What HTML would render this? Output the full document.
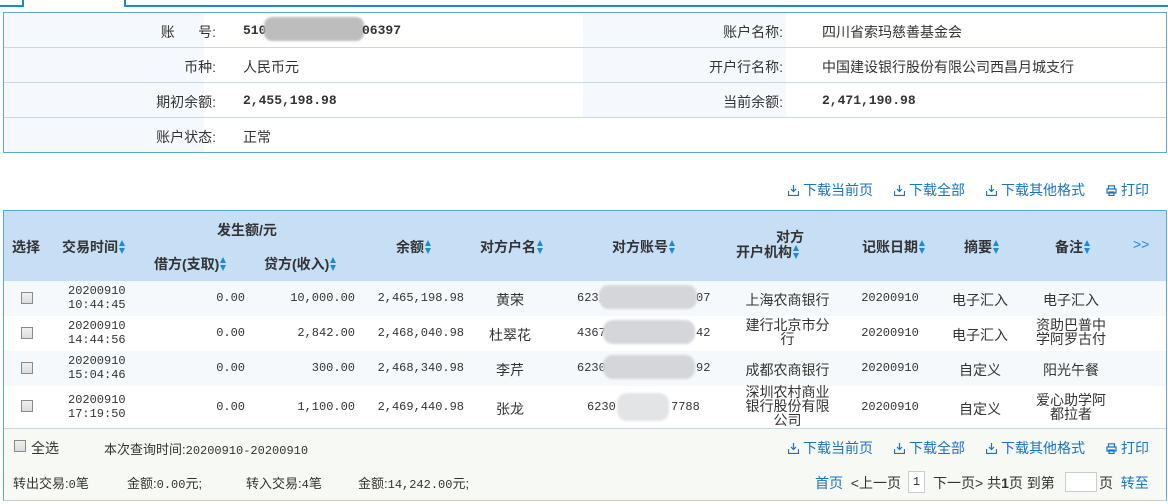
<!DOCTYPE html>
<html><head><meta charset="utf-8"><style>
*{margin:0;padding:0;box-sizing:border-box}
body{width:1168px;height:504px;background:#fff;position:relative;overflow:hidden;font-family:"Liberation Sans","Noto Sans CJK SC",sans-serif;font-size:13px;color:#333}
.a{position:absolute;white-space:nowrap}
.mono{font-family:"Liberation Mono","Noto Sans CJK SC",monospace;font-size:12px}
.b{font-weight:bold}
.blue{color:#1a73c0}
.cb{position:absolute;width:12px;height:12px;border:1px solid #8a8a8a;background:linear-gradient(#f0f0f0,#dcdcdc)}
.blur{position:absolute;background:#d4d6d9;border-radius:10px;filter:blur(1px)}
.ar{display:inline-block;width:7px;height:14px;vertical-align:-2px;margin-left:1px;position:relative}
.ar:before{content:"";position:absolute;left:0;top:0;border-left:3.5px solid transparent;border-right:3.5px solid transparent;border-bottom:6px solid #1e8ad6}
.ar:after{content:"";position:absolute;left:0;top:8px;border-left:3.5px solid transparent;border-right:3.5px solid transparent;border-top:6px solid #1e8ad6}
.th{font-weight:bold;font-size:14px;color:#333}
.ic{display:inline-block;width:11px;height:11px;vertical-align:-1px;margin-right:4px}
</style></head><body>
<!-- tabs -->
<div class="a" style="left:0;top:5px;width:24px;height:2px;background:#1e88d0"></div>
<div class="a" style="left:22px;top:0;width:2px;height:7px;background:#1e88d0"></div>
<div class="a" style="left:124px;top:0;width:2px;height:7px;background:#1e88d0"></div>
<div class="a" style="left:124px;top:5px;width:1044px;height:2px;background:#1e88d0"></div>
<!-- info table -->
<div class="a" style="left:3px;top:12px;width:1164px;height:141px;border:1px solid #5aa6e0;background:#fff"></div>
<div class="a" style="left:4px;top:13px;width:200px;height:139px;background:#f5f9fd"></div>
<div class="a" style="left:583px;top:13px;width:203px;height:104px;background:#f5f9fd"></div>
<div class="a" style="left:4px;top:47px;width:1162px;height:1px;background:#c8d8e8"></div>
<div class="a" style="left:4px;top:82px;width:1162px;height:1px;background:#c8d8e8"></div>
<div class="a" style="left:4px;top:117px;width:1162px;height:1px;background:#c8d8e8"></div>
<div class="a" style="left:4px;top:22px;width:212px;text-align:right;font-size:14px">账&nbsp;&nbsp;&nbsp;&nbsp;&nbsp;&nbsp;号:</div>
<div class="a" style="left:4px;top:57px;width:212px;text-align:right;font-size:14px">币种:</div>
<div class="a" style="left:4px;top:92px;width:212px;text-align:right;font-size:14px">期初余额:</div>
<div class="a" style="left:4px;top:127px;width:212px;text-align:right;font-size:14px">账户状态:</div>
<div class="a mono b" style="left:243px;top:23px;font-size:13px">510</div>
<div class="blur" style="left:264px;top:17px;width:100px;height:24px;background:#bdbdbd;border-radius:8px"></div>
<div class="a mono b" style="left:362px;top:23px;font-size:13px">06397</div>
<div class="a" style="left:243px;top:57px;font-size:14px">人民币元</div>
<div class="a mono b" style="left:243px;top:93px;font-size:13px">2,455,198.98</div>
<div class="a" style="left:243px;top:127px;font-size:14px">正常</div>
<div class="a" style="left:583px;top:22px;width:200px;text-align:right;font-size:14px">账户名称:</div>
<div class="a" style="left:583px;top:57px;width:200px;text-align:right;font-size:14px">开户行名称:</div>
<div class="a" style="left:583px;top:92px;width:200px;text-align:right;font-size:14px">当前余额:</div>
<div class="a" style="left:822px;top:22px;font-size:14px">四川省索玛慈善基金会</div>
<div class="a" style="left:822px;top:57px;font-size:14px">中国建设银行股份有限公司西昌月城支行</div>
<div class="a mono b" style="left:822px;top:93px;font-size:13px">2,471,190.98</div>
<!-- toolbar -->
<div class="a blue" style="left:788px;top:180px;font-size:14px"><svg class="ic" viewBox="0 0 11 11"><path d="M5.5 0v6M3 4l2.5 2.5L8 4M.5 6v4.5h10V6" fill="none" stroke="#1a73c0" stroke-width="1.2"/></svg>下载当前页</div>
<div class="a blue" style="left:894px;top:180px;font-size:14px"><svg class="ic" viewBox="0 0 11 11"><path d="M5.5 0v6M3 4l2.5 2.5L8 4M.5 6v4.5h10V6" fill="none" stroke="#1a73c0" stroke-width="1.2"/></svg>下载全部</div>
<div class="a blue" style="left:986px;top:180px;font-size:14px"><svg class="ic" viewBox="0 0 11 11"><path d="M5.5 0v6M3 4l2.5 2.5L8 4M.5 6v4.5h10V6" fill="none" stroke="#1a73c0" stroke-width="1.2"/></svg>下载其他格式</div>
<div class="a blue" style="left:1106px;top:180px;font-size:14px"><svg class="ic" viewBox="0 0 11 11"><path d="M2.5 4V.8h6V4M1 4h9v4H1zM3 7h5v3.5H3z" fill="none" stroke="#1a73c0" stroke-width="1.2"/></svg>打印</div>
<!-- data table -->
<div class="a" style="left:3px;top:210px;width:1164px;height:291px;border:1px solid #5aa6e0;border-bottom-color:#ccc"></div>
<div class="a" style="left:4px;top:211px;width:1162px;height:70px;background:#c6dff5"></div>
<div class="a" style="left:4px;top:281px;width:1162px;height:35px;background:#f5f9fc"></div>
<div class="a" style="left:4px;top:351px;width:1162px;height:35px;background:#f5f9fc"></div>
<div class="a" style="left:4px;top:428px;width:1162px;height:72px;background:#f7f9f4;border-top:1px solid #c8d8e8"></div>
<div class="a th" style="left:12px;top:237px">选择</div>
<div class="a th" style="left:62px;top:237px">交易时间<i class="ar"></i></div>
<div class="a th" style="left:217px;top:220px">发生额/元</div>
<div class="a th" style="left:154px;top:254px">借方(支取)<i class="ar"></i></div>
<div class="a th" style="left:264px;top:254px">贷方(收入)<i class="ar"></i></div>
<div class="a th" style="left:396px;top:237px">余额<i class="ar"></i></div>
<div class="a th" style="left:480px;top:237px">对方户名<i class="ar"></i></div>
<div class="a th" style="left:612px;top:237px">对方账号<i class="ar"></i></div>
<div class="a th" style="left:776px;top:230px;line-height:14px">对方</div>
<div class="a th" style="left:736px;top:244px;line-height:16px">开户机构<i class="ar"></i></div>
<div class="a th" style="left:862px;top:237px">记账日期<i class="ar"></i></div>
<div class="a th" style="left:964px;top:237px">摘要<i class="ar"></i></div>
<div class="a th" style="left:1055px;top:237px">备注<i class="ar"></i></div>
<div class="a" style="left:1133px;top:236px;color:#1e8ad6;font-size:14px">&gt;&gt;</div>

<!-- rows -->
<div class="cb" style="left:21px;top:292px"></div>
<div class="cb" style="left:21px;top:327px"></div>
<div class="cb" style="left:21px;top:362px"></div>
<div class="cb" style="left:21px;top:400px"></div>

<div class="a mono" style="left:68px;top:284px;line-height:14px">20200910<br>10:44:45</div>
<div class="a mono" style="left:68px;top:319px;line-height:14px">20200910<br>14:44:56</div>
<div class="a mono" style="left:68px;top:354px;line-height:14px">20200910<br>15:04:46</div>
<div class="a mono" style="left:68px;top:393px;line-height:14px">20200910<br>17:19:50</div>

<div class="a mono" style="left:140px;top:291px;width:105px;text-align:right">0.00</div>
<div class="a mono" style="left:140px;top:326px;width:105px;text-align:right">0.00</div>
<div class="a mono" style="left:140px;top:361px;width:105px;text-align:right">0.00</div>
<div class="a mono" style="left:140px;top:400px;width:105px;text-align:right">0.00</div>

<div class="a mono" style="left:240px;top:291px;width:115px;text-align:right">10,000.00</div>
<div class="a mono" style="left:240px;top:326px;width:115px;text-align:right">2,842.00</div>
<div class="a mono" style="left:240px;top:361px;width:115px;text-align:right">300.00</div>
<div class="a mono" style="left:240px;top:400px;width:115px;text-align:right">1,100.00</div>

<div class="a mono" style="left:350px;top:291px;width:114px;text-align:right">2,465,198.98</div>
<div class="a mono" style="left:350px;top:326px;width:114px;text-align:right">2,468,040.98</div>
<div class="a mono" style="left:350px;top:361px;width:114px;text-align:right">2,468,340.98</div>
<div class="a mono" style="left:350px;top:400px;width:114px;text-align:right">2,469,440.98</div>

<div class="a" style="left:470px;top:290px;width:80px;text-align:center;font-size:14px">黄荣</div>
<div class="a" style="left:470px;top:325px;width:80px;text-align:center;font-size:14px">杜翠花</div>
<div class="a" style="left:470px;top:360px;width:80px;text-align:center;font-size:14px">李芹</div>
<div class="a" style="left:470px;top:399px;width:80px;text-align:center;font-size:14px">张龙</div>

<div class="a mono" style="left:577px;top:291px">6231</div><div class="a mono" style="left:696px;top:291px">07</div>
<div class="a mono" style="left:577px;top:326px">4367</div><div class="a mono" style="left:696px;top:326px">42</div>
<div class="a mono" style="left:577px;top:361px">6230</div><div class="a mono" style="left:696px;top:361px">92</div>
<div class="a mono" style="left:587px;top:400px">6230</div><div class="a mono" style="left:671px;top:400px">7788</div>
<div class="blur" style="left:599px;top:285px;width:98px;height:24px"></div>
<div class="blur" style="left:603px;top:320px;width:92px;height:24px"></div>
<div class="blur" style="left:603px;top:355px;width:92px;height:24px"></div>
<div class="blur" style="left:617px;top:393px;width:52px;height:28px;background:#e2e4e6"></div>

<div class="a" style="left:730px;top:290px;width:115px;text-align:center;font-size:14px">上海农商银行</div>
<div class="a" style="left:730px;top:318px;width:115px;text-align:center;font-size:14px;line-height:14px">建行北京市分<br>行</div>
<div class="a" style="left:730px;top:360px;width:115px;text-align:center;font-size:14px">成都农商银行</div>
<div class="a" style="left:730px;top:385px;width:115px;text-align:center;font-size:14px;line-height:14px">深圳农村商业<br>银行股份有限<br>公司</div>

<div class="a mono" style="left:850px;top:291px;width:80px;text-align:center">20200910</div>
<div class="a mono" style="left:850px;top:326px;width:80px;text-align:center">20200910</div>
<div class="a mono" style="left:850px;top:361px;width:80px;text-align:center">20200910</div>
<div class="a mono" style="left:850px;top:400px;width:80px;text-align:center">20200910</div>

<div class="a" style="left:940px;top:290px;width:80px;text-align:center;font-size:14px">电子汇入</div>
<div class="a" style="left:940px;top:325px;width:80px;text-align:center;font-size:14px">电子汇入</div>
<div class="a" style="left:940px;top:360px;width:80px;text-align:center;font-size:14px">自定义</div>
<div class="a" style="left:940px;top:399px;width:80px;text-align:center;font-size:14px">自定义</div>

<div class="a" style="left:1025px;top:290px;width:92px;text-align:center;font-size:14px">电子汇入</div>
<div class="a" style="left:1025px;top:318px;width:92px;text-align:center;font-size:14px;line-height:14px">资助巴普中<br>学阿罗古付</div>
<div class="a" style="left:1025px;top:360px;width:92px;text-align:center;font-size:14px">阳光午餐</div>
<div class="a" style="left:1025px;top:393px;width:92px;text-align:center;font-size:14px;line-height:14px">爱心助学阿<br>都拉者</div>

<!-- footer -->
<div class="cb" style="left:14px;top:440px"></div>
<div class="a" style="left:31px;top:438px;font-size:14px">全选</div>
<div class="a" style="left:104px;top:439px">本次查询时间:<span class="mono">20200910-20200910</span></div>
<div class="a blue" style="left:788px;top:438px;font-size:14px"><svg class="ic" viewBox="0 0 11 11"><path d="M5.5 0v6M3 4l2.5 2.5L8 4M.5 6v4.5h10V6" fill="none" stroke="#1a73c0" stroke-width="1.2"/></svg>下载当前页</div>
<div class="a blue" style="left:894px;top:438px;font-size:14px"><svg class="ic" viewBox="0 0 11 11"><path d="M5.5 0v6M3 4l2.5 2.5L8 4M.5 6v4.5h10V6" fill="none" stroke="#1a73c0" stroke-width="1.2"/></svg>下载全部</div>
<div class="a blue" style="left:986px;top:438px;font-size:14px"><svg class="ic" viewBox="0 0 11 11"><path d="M5.5 0v6M3 4l2.5 2.5L8 4M.5 6v4.5h10V6" fill="none" stroke="#1a73c0" stroke-width="1.2"/></svg>下载其他格式</div>
<div class="a blue" style="left:1106px;top:438px;font-size:14px"><svg class="ic" viewBox="0 0 11 11"><path d="M2.5 4V.8h6V4M1 4h9v4H1zM3 7h5v3.5H3z" fill="none" stroke="#1a73c0" stroke-width="1.2"/></svg>打印</div>

<div class="a" style="left:13px;top:473px">转出交易:<span class="mono">0</span>笔</div>
<div class="a" style="left:127px;top:473px">金额:<span class="mono">0.00</span>元;</div>
<div class="a" style="left:246px;top:473px">转入交易:<span class="mono">4</span>笔</div>
<div class="a" style="left:358px;top:473px">金额:<span class="mono">14,242.00</span>元;</div>
<div class="a" style="left:815px;top:473px;font-size:14px"><span class="blue">首页</span>&nbsp;&nbsp;&lt;上一页</div>
<div class="a mono" style="left:908px;top:471px;width:17px;height:22px;border:1px solid #ccc;background:#fff;text-align:center;line-height:20px">1</div>
<div class="a" style="left:933px;top:473px;font-size:14px">下一页&gt; 共<b>1</b>页 到第</div>
<div class="a" style="left:1065px;top:472px;width:32px;height:20px;border:1px solid #ccc;background:#fff"></div>
<div class="a" style="left:1099px;top:473px;font-size:14px">页&nbsp;&nbsp;<span class="blue">转至</span></div>
</body></html>
